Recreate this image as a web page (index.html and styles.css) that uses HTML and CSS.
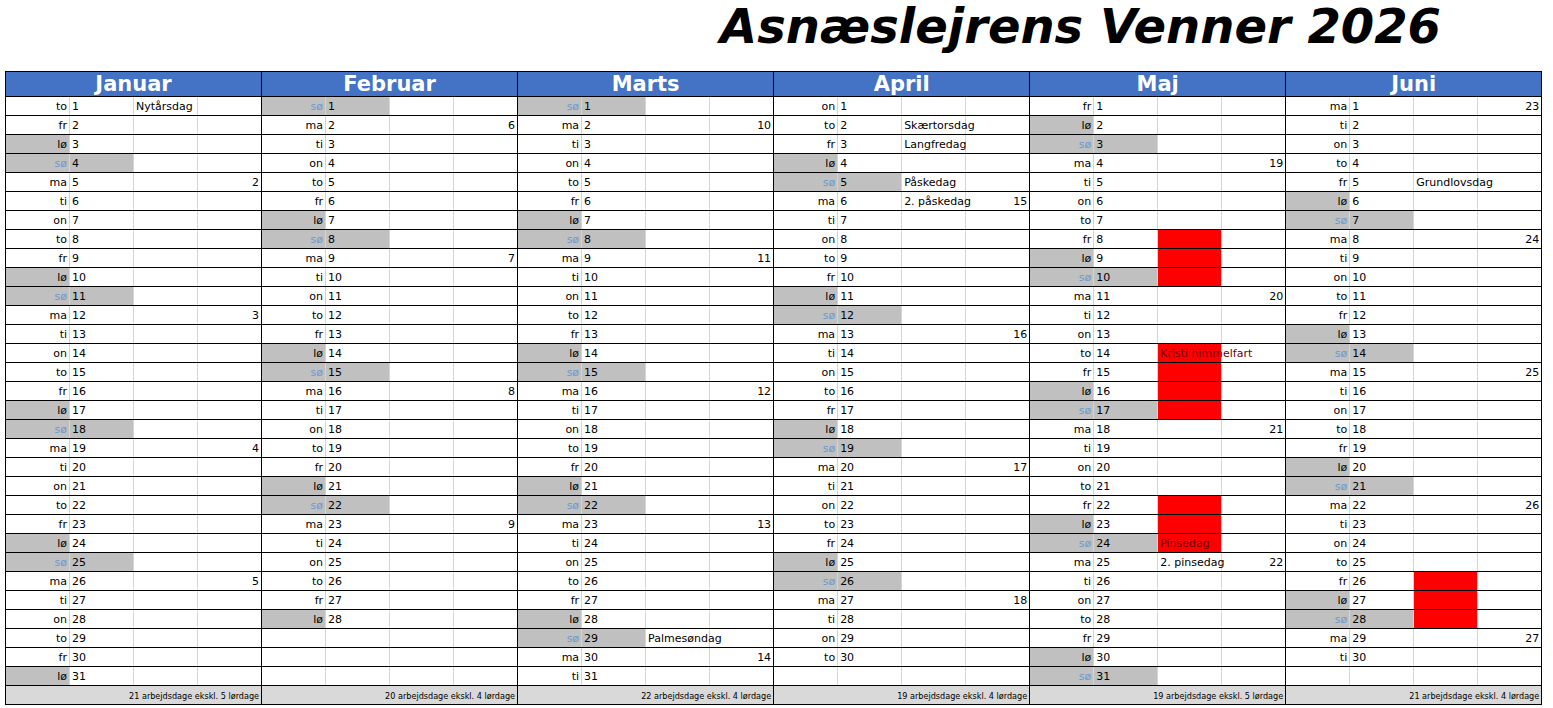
FILE: index.html
```html
<!DOCTYPE html>
<html lang="da">
<head>
<meta charset="utf-8">
<title>Asnæslejrens Venner 2026</title>
<link rel="stylesheet" href="styles.css">
</head>
<body>
<div class="page">
<h1 class="title">Asnæslejrens Venner 2026</h1>
<table class="cal">
<colgroup>
<col><col><col><col><col><col><col><col><col><col><col><col><col><col><col><col><col><col><col><col><col><col><col><col>
</colgroup>
<thead>
<tr><th colspan="4">Januar</th><th colspan="4">Februar</th><th colspan="4">Marts</th><th colspan="4">April</th><th colspan="4">Maj</th><th colspan="4">Juni</th></tr>
</thead>
<tbody>
<tr>
<td class="w">to</td><td class="n">1</td><td class="h">Nytårsdag</td><td></td>
<td class="w g s">sø</td><td class="n g">1</td><td></td><td></td>
<td class="w g s">sø</td><td class="n g">1</td><td></td><td></td>
<td class="w">on</td><td class="n">1</td><td></td><td></td>
<td class="w">fr</td><td class="n">1</td><td></td><td></td>
<td class="w">ma</td><td class="n">1</td><td></td><td class="k">23</td>
</tr>
<tr>
<td class="w">fr</td><td class="n">2</td><td></td><td></td>
<td class="w">ma</td><td class="n">2</td><td></td><td class="k">6</td>
<td class="w">ma</td><td class="n">2</td><td></td><td class="k">10</td>
<td class="w">to</td><td class="n">2</td><td class="h">Skærtorsdag</td><td></td>
<td class="w g">lø</td><td class="n">2</td><td></td><td></td>
<td class="w">ti</td><td class="n">2</td><td></td><td></td>
</tr>
<tr>
<td class="w g">lø</td><td class="n">3</td><td></td><td></td>
<td class="w">ti</td><td class="n">3</td><td></td><td></td>
<td class="w">ti</td><td class="n">3</td><td></td><td></td>
<td class="w">fr</td><td class="n">3</td><td class="h">Langfredag</td><td></td>
<td class="w g s">sø</td><td class="n g">3</td><td></td><td></td>
<td class="w">on</td><td class="n">3</td><td></td><td></td>
</tr>
<tr>
<td class="w g s">sø</td><td class="n g">4</td><td></td><td></td>
<td class="w">on</td><td class="n">4</td><td></td><td></td>
<td class="w">on</td><td class="n">4</td><td></td><td></td>
<td class="w g">lø</td><td class="n">4</td><td></td><td></td>
<td class="w">ma</td><td class="n">4</td><td></td><td class="k">19</td>
<td class="w">to</td><td class="n">4</td><td></td><td></td>
</tr>
<tr>
<td class="w">ma</td><td class="n">5</td><td></td><td class="k">2</td>
<td class="w">to</td><td class="n">5</td><td></td><td></td>
<td class="w">to</td><td class="n">5</td><td></td><td></td>
<td class="w g s">sø</td><td class="n g">5</td><td class="h">Påskedag</td><td></td>
<td class="w">ti</td><td class="n">5</td><td></td><td></td>
<td class="w">fr</td><td class="n">5</td><td class="h">Grundlovsdag</td><td></td>
</tr>
<tr>
<td class="w">ti</td><td class="n">6</td><td></td><td></td>
<td class="w">fr</td><td class="n">6</td><td></td><td></td>
<td class="w">fr</td><td class="n">6</td><td></td><td></td>
<td class="w">ma</td><td class="n">6</td><td class="h">2. påskedag</td><td class="k">15</td>
<td class="w">on</td><td class="n">6</td><td></td><td></td>
<td class="w g">lø</td><td class="n">6</td><td></td><td></td>
</tr>
<tr>
<td class="w">on</td><td class="n">7</td><td></td><td></td>
<td class="w g">lø</td><td class="n">7</td><td></td><td></td>
<td class="w g">lø</td><td class="n">7</td><td></td><td></td>
<td class="w">ti</td><td class="n">7</td><td></td><td></td>
<td class="w">to</td><td class="n">7</td><td></td><td></td>
<td class="w g s">sø</td><td class="n g">7</td><td></td><td></td>
</tr>
<tr>
<td class="w">to</td><td class="n">8</td><td></td><td></td>
<td class="w g s">sø</td><td class="n g">8</td><td></td><td></td>
<td class="w g s">sø</td><td class="n g">8</td><td></td><td></td>
<td class="w">on</td><td class="n">8</td><td></td><td></td>
<td class="w">fr</td><td class="n">8</td><td class="red"></td><td></td>
<td class="w">ma</td><td class="n">8</td><td></td><td class="k">24</td>
</tr>
<tr>
<td class="w">fr</td><td class="n">9</td><td></td><td></td>
<td class="w">ma</td><td class="n">9</td><td></td><td class="k">7</td>
<td class="w">ma</td><td class="n">9</td><td></td><td class="k">11</td>
<td class="w">to</td><td class="n">9</td><td></td><td></td>
<td class="w g">lø</td><td class="n">9</td><td class="red"></td><td></td>
<td class="w">ti</td><td class="n">9</td><td></td><td></td>
</tr>
<tr>
<td class="w g">lø</td><td class="n">10</td><td></td><td></td>
<td class="w">ti</td><td class="n">10</td><td></td><td></td>
<td class="w">ti</td><td class="n">10</td><td></td><td></td>
<td class="w">fr</td><td class="n">10</td><td></td><td></td>
<td class="w g s">sø</td><td class="n g">10</td><td class="red"></td><td></td>
<td class="w">on</td><td class="n">10</td><td></td><td></td>
</tr>
<tr>
<td class="w g s">sø</td><td class="n g">11</td><td></td><td></td>
<td class="w">on</td><td class="n">11</td><td></td><td></td>
<td class="w">on</td><td class="n">11</td><td></td><td></td>
<td class="w g">lø</td><td class="n">11</td><td></td><td></td>
<td class="w">ma</td><td class="n">11</td><td></td><td class="k">20</td>
<td class="w">to</td><td class="n">11</td><td></td><td></td>
</tr>
<tr>
<td class="w">ma</td><td class="n">12</td><td></td><td class="k">3</td>
<td class="w">to</td><td class="n">12</td><td></td><td></td>
<td class="w">to</td><td class="n">12</td><td></td><td></td>
<td class="w g s">sø</td><td class="n g">12</td><td></td><td></td>
<td class="w">ti</td><td class="n">12</td><td></td><td></td>
<td class="w">fr</td><td class="n">12</td><td></td><td></td>
</tr>
<tr>
<td class="w">ti</td><td class="n">13</td><td></td><td></td>
<td class="w">fr</td><td class="n">13</td><td></td><td></td>
<td class="w">fr</td><td class="n">13</td><td></td><td></td>
<td class="w">ma</td><td class="n">13</td><td></td><td class="k">16</td>
<td class="w">on</td><td class="n">13</td><td></td><td></td>
<td class="w g">lø</td><td class="n">13</td><td></td><td></td>
</tr>
<tr>
<td class="w">on</td><td class="n">14</td><td></td><td></td>
<td class="w g">lø</td><td class="n">14</td><td></td><td></td>
<td class="w g">lø</td><td class="n">14</td><td></td><td></td>
<td class="w">ti</td><td class="n">14</td><td></td><td></td>
<td class="w">to</td><td class="n">14</td><td class="h red">Kristi himmelfart</td><td></td>
<td class="w g s">sø</td><td class="n g">14</td><td></td><td></td>
</tr>
<tr>
<td class="w">to</td><td class="n">15</td><td></td><td></td>
<td class="w g s">sø</td><td class="n g">15</td><td></td><td></td>
<td class="w g s">sø</td><td class="n g">15</td><td></td><td></td>
<td class="w">on</td><td class="n">15</td><td></td><td></td>
<td class="w">fr</td><td class="n">15</td><td class="red"></td><td></td>
<td class="w">ma</td><td class="n">15</td><td></td><td class="k">25</td>
</tr>
<tr>
<td class="w">fr</td><td class="n">16</td><td></td><td></td>
<td class="w">ma</td><td class="n">16</td><td></td><td class="k">8</td>
<td class="w">ma</td><td class="n">16</td><td></td><td class="k">12</td>
<td class="w">to</td><td class="n">16</td><td></td><td></td>
<td class="w g">lø</td><td class="n">16</td><td class="red"></td><td></td>
<td class="w">ti</td><td class="n">16</td><td></td><td></td>
</tr>
<tr>
<td class="w g">lø</td><td class="n">17</td><td></td><td></td>
<td class="w">ti</td><td class="n">17</td><td></td><td></td>
<td class="w">ti</td><td class="n">17</td><td></td><td></td>
<td class="w">fr</td><td class="n">17</td><td></td><td></td>
<td class="w g s">sø</td><td class="n g">17</td><td class="red"></td><td></td>
<td class="w">on</td><td class="n">17</td><td></td><td></td>
</tr>
<tr>
<td class="w g s">sø</td><td class="n g">18</td><td></td><td></td>
<td class="w">on</td><td class="n">18</td><td></td><td></td>
<td class="w">on</td><td class="n">18</td><td></td><td></td>
<td class="w g">lø</td><td class="n">18</td><td></td><td></td>
<td class="w">ma</td><td class="n">18</td><td></td><td class="k">21</td>
<td class="w">to</td><td class="n">18</td><td></td><td></td>
</tr>
<tr>
<td class="w">ma</td><td class="n">19</td><td></td><td class="k">4</td>
<td class="w">to</td><td class="n">19</td><td></td><td></td>
<td class="w">to</td><td class="n">19</td><td></td><td></td>
<td class="w g s">sø</td><td class="n g">19</td><td></td><td></td>
<td class="w">ti</td><td class="n">19</td><td></td><td></td>
<td class="w">fr</td><td class="n">19</td><td></td><td></td>
</tr>
<tr>
<td class="w">ti</td><td class="n">20</td><td></td><td></td>
<td class="w">fr</td><td class="n">20</td><td></td><td></td>
<td class="w">fr</td><td class="n">20</td><td></td><td></td>
<td class="w">ma</td><td class="n">20</td><td></td><td class="k">17</td>
<td class="w">on</td><td class="n">20</td><td></td><td></td>
<td class="w g">lø</td><td class="n">20</td><td></td><td></td>
</tr>
<tr>
<td class="w">on</td><td class="n">21</td><td></td><td></td>
<td class="w g">lø</td><td class="n">21</td><td></td><td></td>
<td class="w g">lø</td><td class="n">21</td><td></td><td></td>
<td class="w">ti</td><td class="n">21</td><td></td><td></td>
<td class="w">to</td><td class="n">21</td><td></td><td></td>
<td class="w g s">sø</td><td class="n g">21</td><td></td><td></td>
</tr>
<tr>
<td class="w">to</td><td class="n">22</td><td></td><td></td>
<td class="w g s">sø</td><td class="n g">22</td><td></td><td></td>
<td class="w g s">sø</td><td class="n g">22</td><td></td><td></td>
<td class="w">on</td><td class="n">22</td><td></td><td></td>
<td class="w">fr</td><td class="n">22</td><td class="red"></td><td></td>
<td class="w">ma</td><td class="n">22</td><td></td><td class="k">26</td>
</tr>
<tr>
<td class="w">fr</td><td class="n">23</td><td></td><td></td>
<td class="w">ma</td><td class="n">23</td><td></td><td class="k">9</td>
<td class="w">ma</td><td class="n">23</td><td></td><td class="k">13</td>
<td class="w">to</td><td class="n">23</td><td></td><td></td>
<td class="w g">lø</td><td class="n">23</td><td class="red"></td><td></td>
<td class="w">ti</td><td class="n">23</td><td></td><td></td>
</tr>
<tr>
<td class="w g">lø</td><td class="n">24</td><td></td><td></td>
<td class="w">ti</td><td class="n">24</td><td></td><td></td>
<td class="w">ti</td><td class="n">24</td><td></td><td></td>
<td class="w">fr</td><td class="n">24</td><td></td><td></td>
<td class="w g s">sø</td><td class="n g">24</td><td class="h red">Pinsedag</td><td></td>
<td class="w">on</td><td class="n">24</td><td></td><td></td>
</tr>
<tr>
<td class="w g s">sø</td><td class="n g">25</td><td></td><td></td>
<td class="w">on</td><td class="n">25</td><td></td><td></td>
<td class="w">on</td><td class="n">25</td><td></td><td></td>
<td class="w g">lø</td><td class="n">25</td><td></td><td></td>
<td class="w">ma</td><td class="n">25</td><td class="h">2. pinsedag</td><td class="k">22</td>
<td class="w">to</td><td class="n">25</td><td></td><td></td>
</tr>
<tr>
<td class="w">ma</td><td class="n">26</td><td></td><td class="k">5</td>
<td class="w">to</td><td class="n">26</td><td></td><td></td>
<td class="w">to</td><td class="n">26</td><td></td><td></td>
<td class="w g s">sø</td><td class="n g">26</td><td></td><td></td>
<td class="w">ti</td><td class="n">26</td><td></td><td></td>
<td class="w">fr</td><td class="n">26</td><td class="red"></td><td></td>
</tr>
<tr>
<td class="w">ti</td><td class="n">27</td><td></td><td></td>
<td class="w">fr</td><td class="n">27</td><td></td><td></td>
<td class="w">fr</td><td class="n">27</td><td></td><td></td>
<td class="w">ma</td><td class="n">27</td><td></td><td class="k">18</td>
<td class="w">on</td><td class="n">27</td><td></td><td></td>
<td class="w g">lø</td><td class="n">27</td><td class="red"></td><td></td>
</tr>
<tr>
<td class="w">on</td><td class="n">28</td><td></td><td></td>
<td class="w g">lø</td><td class="n">28</td><td></td><td></td>
<td class="w g">lø</td><td class="n">28</td><td></td><td></td>
<td class="w">ti</td><td class="n">28</td><td></td><td></td>
<td class="w">to</td><td class="n">28</td><td></td><td></td>
<td class="w g s">sø</td><td class="n g">28</td><td class="red"></td><td></td>
</tr>
<tr>
<td class="w">to</td><td class="n">29</td><td></td><td></td>
<td class="w"></td><td class="n"></td><td></td><td></td>
<td class="w g s">sø</td><td class="n g">29</td><td class="h">Palmesøndag</td><td></td>
<td class="w">on</td><td class="n">29</td><td></td><td></td>
<td class="w">fr</td><td class="n">29</td><td></td><td></td>
<td class="w">ma</td><td class="n">29</td><td></td><td class="k">27</td>
</tr>
<tr>
<td class="w">fr</td><td class="n">30</td><td></td><td></td>
<td class="w"></td><td class="n"></td><td></td><td></td>
<td class="w">ma</td><td class="n">30</td><td></td><td class="k">14</td>
<td class="w">to</td><td class="n">30</td><td></td><td></td>
<td class="w g">lø</td><td class="n">30</td><td></td><td></td>
<td class="w">ti</td><td class="n">30</td><td></td><td></td>
</tr>
<tr>
<td class="w g">lø</td><td class="n">31</td><td></td><td></td>
<td class="w"></td><td class="n"></td><td></td><td></td>
<td class="w">ti</td><td class="n">31</td><td></td><td></td>
<td class="w"></td><td class="n"></td><td></td><td></td>
<td class="w g s">sø</td><td class="n g">31</td><td></td><td></td>
<td class="w"></td><td class="n"></td><td></td><td></td>
</tr>
</tbody>
<tfoot>
<tr>
<td colspan="4" class="f">21 arbejdsdage ekskl. 5 lørdage</td>
<td colspan="4" class="f">20 arbejdsdage ekskl. 4 lørdage</td>
<td colspan="4" class="f">22 arbejdsdage ekskl. 4 lørdage</td>
<td colspan="4" class="f">19 arbejdsdage ekskl. 4 lørdage</td>
<td colspan="4" class="f">19 arbejdsdage ekskl. 5 lørdage</td>
<td colspan="4" class="f">21 arbejdsdage ekskl. 4 lørdage</td>
</tr>
</tfoot>
</table>
</div>
</body>
</html>
```

FILE: styles.css
```css
html, body {
  margin: 0;
  padding: 0;
  background: #ffffff;
}

.page {
  padding: 0 5px;
  font-family: "DejaVu Sans", Verdana, sans-serif;
  color: #000000;
}

.title {
  margin: 0;
  padding: 1px 0 19px 715px;
  height: 51px;
  line-height: 51px;
  font-family: "DejaVu Sans", Verdana, sans-serif;
  font-size: 48px;
  font-weight: bold;
  font-style: italic;
  white-space: nowrap;
}

.cal {
  table-layout: fixed;
  border-collapse: collapse;
  width: 1536px;
  border: 1px solid #000000;
}

.cal col {
  width: 64px;
}

.cal th {
  height: 24px;
  padding: 0;
  background: #4472c4;
  color: #ffffff;
  font-family: "DejaVu Sans", Verdana, sans-serif;
  font-size: 21px;
  font-weight: bold;
  line-height: 22px;
  text-align: center;
  border-left: 1px solid #000000;
  border-bottom: 1px solid #000000;
}

.cal td {
  height: 16px;
  padding: 2px 2px 0 2px;
  font-size: 11px;
  line-height: 16px;
  white-space: nowrap;
  overflow: visible;
  vertical-align: middle;
  border-bottom: 1px solid #000000;
  border-left: 1px solid #d4d4d4;
}

.cal td.w {
  text-align: right;
  border-left: 1px solid #000000;
}

.cal td.n {
  text-align: left;
}

.cal td.h {
  text-align: left;
}

.cal td.k {
  text-align: right;
}

.cal td.g {
  background: #c0c0c0;
}

.cal td.s {
  color: #6c98cf;
}

.cal td.red {
  background: #ff0000;
  color: #6e0000;
}

.cal td.f {
  height: 16px;
  background: #d9d9d9;
  text-align: right;
  font-family: "Liberation Sans Narrow", "DejaVu Sans Condensed", sans-serif;
  font-size: 9px;
  border-left: 1px solid #000000;
  border-top: 1px solid #000000;
}
```
